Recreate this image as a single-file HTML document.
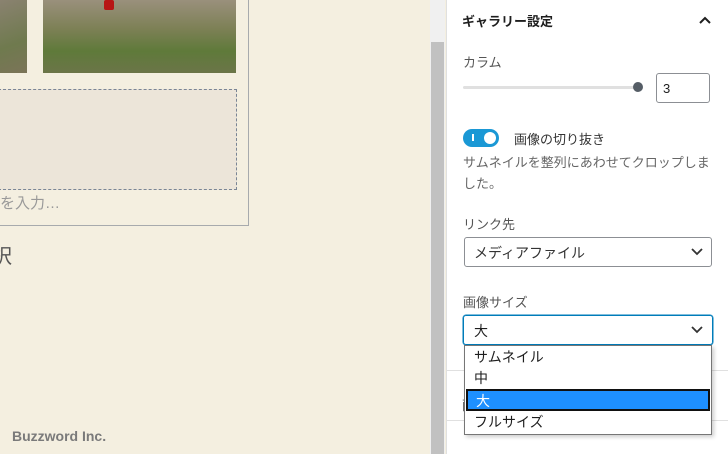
<!DOCTYPE html>
<html><head><meta charset="utf-8"><style>
*{margin:0;padding:0;box-sizing:border-box}
body{width:728px;height:454px;overflow:hidden;position:relative;background:#f4efe0;font-family:"Liberation Sans","Noto Sans CJK JP",sans-serif;color:#1e1e1e}
.a{position:absolute}
</style></head><body>
<div class="a" style="left:0;top:0;width:27px;height:73px;background:linear-gradient(160deg,#8a8270,#6f7a4e 60%,#7b7458)"></div>
<div class="a" style="left:43px;top:0;width:193px;height:73px;background:linear-gradient(180deg,#9a907c 0%,#7c8055 40%,#5f7a3a 70%,#6b7548 100%)"></div>
<div class="a" style="left:104px;top:0;width:10px;height:10px;background:#b71515;border-radius:2px"></div>
<div class="a" style="left:-2px;top:-2px;width:251px;height:228px;border:1px solid #a7aaad;border-top:none;border-left:none"></div>
<div class="a" style="left:-2px;top:89px;width:239px;height:101px;border:1px dashed #7a8595;background:#ece5d9"></div>
<div class="a" style="left:0;top:192px;font-size:15px;color:#999">を入力…</div>
<div class="a" style="left:-8px;top:240px;font-size:20px;color:#555">択</div>
<div class="a" style="left:12px;top:428px;font-size:14px;font-weight:bold;color:#7a7a7a">Buzzword Inc.</div>
<div class="a" style="left:430px;top:0;width:15px;height:454px;background:#f0f0f0"></div>
<div class="a" style="left:431px;top:42px;width:13px;height:412px;background:#c1c1c1"></div>
<div class="a" style="left:446px;top:0;width:282px;height:454px;background:#fff;border-left:1px solid #e0e0e0"></div>
<div class="a" style="left:447px;top:370px;width:281px;height:1px;background:#e0e0e0"></div>
<div class="a" style="left:447px;top:420px;width:281px;height:1px;background:#e0e0e0"></div>
<div class="a" style="left:462px;top:11px;font-size:13px;font-weight:bold">ギャラリー設定</div>
<svg class="a" style="left:698px;top:15px" width="14" height="10"><path d="M2 8 L7 3 L12 8" stroke="#1e1e1e" stroke-width="2" fill="none"/></svg>
<div class="a" style="left:463px;top:52px;font-size:13px;color:#555">カラム</div>
<div class="a" style="left:463px;top:86px;width:174px;height:3px;background:#e0e0e0;border-radius:2px"></div>
<div class="a" style="left:633px;top:82px;width:10px;height:10px;background:#555d66;border-radius:50%"></div>
<div class="a" style="left:656px;top:73px;width:54px;height:30px;border:1px solid #8c8f94;border-radius:3px;font-size:13px;padding:7px 0 0 6px">3</div>
<div class="a" style="left:463px;top:129px;width:36px;height:18px;background:#1a98d5;border-radius:9px"></div>
<div class="a" style="left:472px;top:134px;width:2px;height:7px;background:#fff"></div>
<div class="a" style="left:484px;top:132px;width:12px;height:12px;background:#fff;border-radius:50%"></div>
<div class="a" style="left:514px;top:129px;font-size:13px;color:#333">画像の切り抜き</div>
<div class="a" style="left:463px;top:152px;width:255px;font-size:13px;line-height:21px;color:#666">サムネイルを整列にあわせてクロップしました。</div>
<div class="a" style="left:463px;top:214px;font-size:13px;color:#555">リンク先</div>
<div class="a" style="left:464px;top:237px;width:248px;height:30px;border:1px solid #8c8f94;border-radius:3px;font-size:14px;padding:5px 0 0 9px;color:#333">メディアファイル</div>
<svg class="a" style="left:690px;top:247px" width="14" height="10"><path d="M2 2 L7 7 L12 2" stroke="#333" stroke-width="1.8" fill="none"/></svg>
<div class="a" style="left:463px;top:292px;font-size:13px;color:#555">画像サイズ</div>
<div class="a" style="left:462px;top:395px;font-size:13px;color:#555">画</div>
<div class="a" style="left:463px;top:315px;width:250px;height:30px;border:1px solid #007cba;box-shadow:0 0 0 0.5px #007cba;border-radius:3px;font-size:14px;padding:5px 0 0 10px;color:#1e1e1e">大</div>
<svg class="a" style="left:690px;top:325px" width="14" height="10"><path d="M2 2 L7 7 L12 2" stroke="#333" stroke-width="1.8" fill="none"/></svg>
<div class="a" style="left:464px;top:345px;width:248px;height:90px;background:#fff;border:1px solid #767676;box-shadow:2px 2px 4px rgba(0,0,0,.2);font-size:14px;color:#1e1e1e">
<div style="height:21px;padding:1px 0 0 9px">サムネイル</div>
<div style="height:22px;padding:1px 0 0 9px">中</div>
<div style="height:22px;padding:0 0 0 8px;background:#1e90ff;color:#fff;border:2px solid #111;margin:0 1px">大</div>
<div style="height:22px;padding:1px 0 0 9px">フルサイズ</div>
</div>
</body></html>
